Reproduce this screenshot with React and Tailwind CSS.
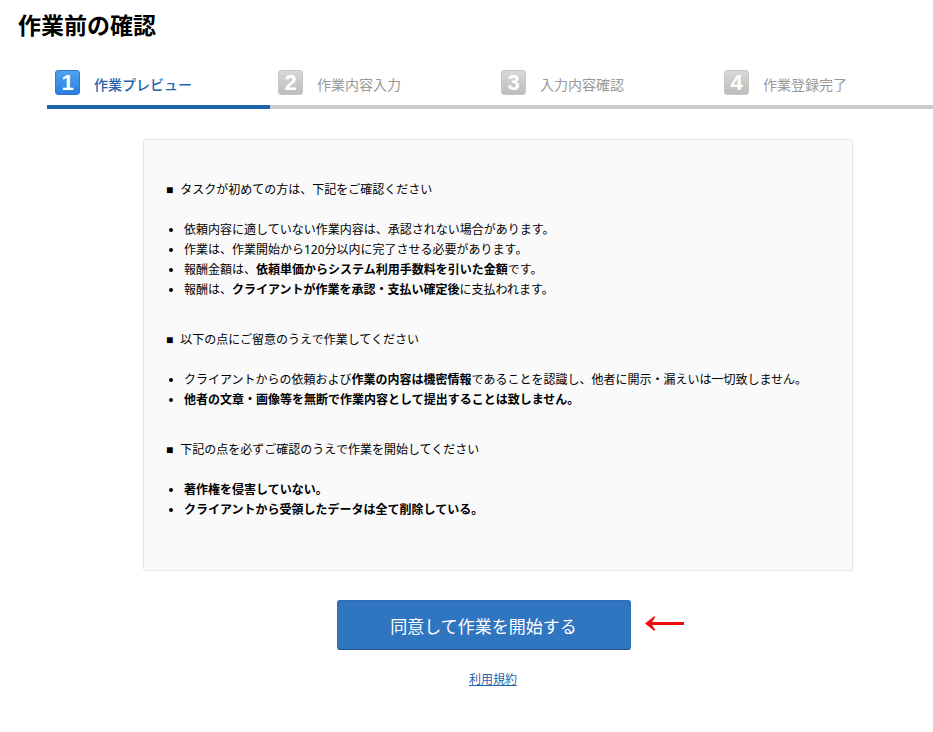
const STEPS = ['作業プレビュー', '作業内容入力', '入力内容確認', '作業登録完了']

const SECTIONS = [
  {
    title: 'タスクが初めての方は、下記をご確認ください',
    items: [
      '依頼内容に適していない作業内容は、承認されない場合があります。',
      '作業は、作業開始から120分以内に完了させる必要があります。',
      <>報酬金額は、<b>依頼単価からシステム利用手数料を引いた金額</b>です。</>,
      <>報酬は、<b>クライアントが作業を承認・支払い確定後</b>に支払われます。</>,
    ],
  },
  {
    title: '以下の点にご留意のうえで作業してください',
    items: [
      <>クライアントからの依頼および<b>作業の内容は機密情報</b>であることを認識し、他者に開示・漏えいは一切致しません。</>,
      <b>他者の文章・画像等を無断で作業内容として提出することは致しません。</b>,
    ],
  },
  {
    title: '下記の点を必ずご確認のうえで作業を開始してください',
    items: [
      <b>著作権を侵害していない。</b>,
      <b>クライアントから受領したデータは全て削除している。</b>,
    ],
  },
]

function Step({ number, label, active }) {
  return (
    <li
      aria-current={active ? 'step' : undefined}
      className={`flex h-[39px] w-[223px] shrink-0 items-start gap-3.5 border-b-4 pl-2 last:w-auto last:flex-1 ${
        active ? 'border-[#1f63ab] font-medium text-[#1f63ab]' : 'border-[#cbcbcb] text-[#999]'
      }`}
    >
      <span
        className={`flex h-[25px] w-[25px] items-center justify-center rounded-[3px] border bg-linear-to-b font-['Liberation_Sans',sans-serif] text-[22px] leading-none font-bold text-white ${
          active
            ? 'border-[#2f78cc] from-[#4fa3ee] to-[#2a7ee0]'
            : 'border-[#c6c6c6] from-[#d8d8d8] to-[#bdbdbd]'
        }`}
      >
        {number}
      </span>
      <span className="pt-1 text-sm leading-[22px]">{label}</span>
    </li>
  )
}

function Section({ title, items }) {
  return (
    <section>
      <h2 className="flex gap-[7px]">
        <span className="font-['Liberation_Sans',sans-serif]">■</span>
        {title}
      </h2>
      <ul className="mt-5 list-disc pl-[18px]">
        {items.map((item, i) => <li key={i}>{item}</li>)}
      </ul>
    </section>
  )
}

export default function App() {
  return (
    <main className="bg-white pb-11 font-['Noto_Sans','Noto_Sans_CJK_JP',sans-serif] text-black" lang="ja">
      <h1 className="pt-2 pl-[18px] text-[23px] leading-[34px] font-bold">作業前の確認</h1>

      <ol className="mt-7 ml-[47px] flex">
        {STEPS.map((label, i) => (
          <Step key={label} number={i + 1} label={label} active={i === 0} />
        ))}
      </ol>

      <div className="mt-[30px] pr-20 pl-[143px]">
        <div className="flex flex-col gap-[30px] rounded-[3px] border border-[#e6e6e6] bg-[#fafafa] px-[22px] pt-10 pb-[50px] text-xs leading-5">
          {SECTIONS.map(s => <Section key={s.title} {...s} />)}
        </div>

        <div className="mt-[29px] flex items-center justify-center gap-3.5 pl-6">
          <button
            type="button"
            className="h-[50px] w-[294px] rounded-[3px] border border-[#2c6db5] border-b-[#23568f] bg-[#3075bf] pt-1 text-[17px] text-white"
          >
            同意して作業を開始する
          </button>
          {/* Red arrow pointing at the button */}
          <svg width="39" height="16" viewBox="0 0 39 16" className="-mt-0.5" aria-hidden="true">
            <path d="M0 7.5 L9.5 0 L10 1.5 L7 6 H39 V9 H7 L10 13.5 L9.5 15 Z" fill="#ee0b0b" />
          </svg>
        </div>

        <p className="mt-5 pr-2.5 text-center text-xs leading-5">
          <a href="#terms" className="text-[#1f63ab] underline">利用規約</a>
        </p>
      </div>
    </main>
  )
}
